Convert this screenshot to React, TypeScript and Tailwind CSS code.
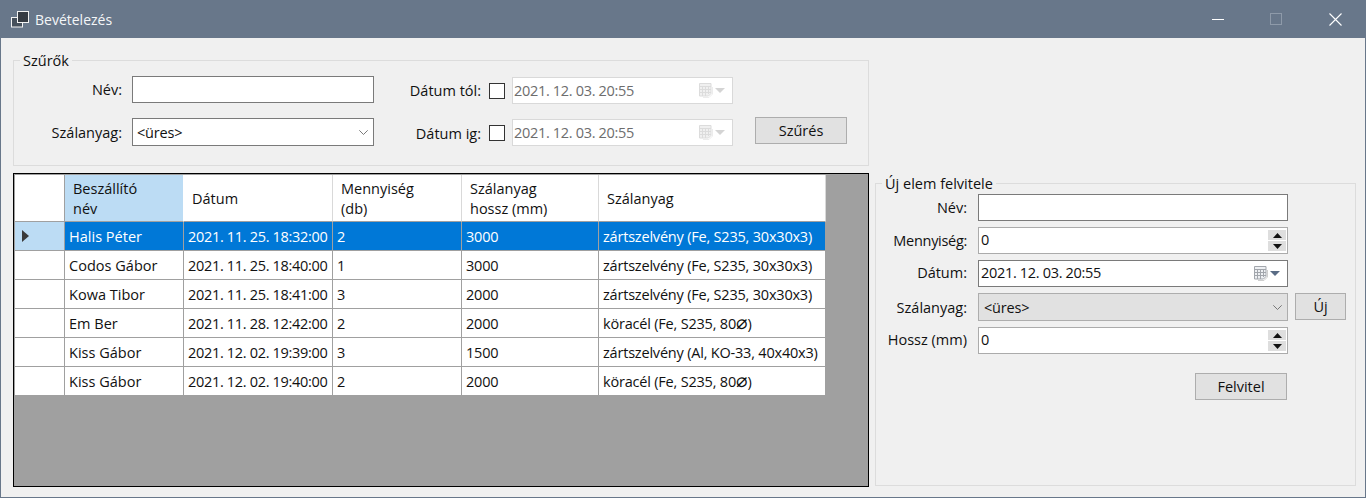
import React from "react";

const Chevron = () => (
  <svg width="9" height="5" viewBox="0 0 9 5" className="shrink-0">
    <path d="M0.3 0.3l4.2 4.2 4.2-4.2" fill="none" stroke="#6b6b6b" strokeWidth="0.9" />
  </svg>
);

const Calendar = ({ off }: { off?: boolean }) => {
  const c = off ? "#dcdcdc" : "#a2a6ac";
  return (
    <svg width="14" height="15" viewBox="0 0 14 15" className="shrink-0">
      <path d="M0.5 0.5h11.5v10l-2.5 2.5H0.5z" fill={off ? "#f0f0f0" : "#eef0f3"} stroke={c} />
      <path d="M3.5 3v10M6.5 3v10M9.5 3v8M1 3.5h11M1 6.5h11M1 9.5h11" stroke={c} strokeWidth="1" fill="none" />
      <path d="M4 14.5h6l3.5-3.5V4" fill="none" stroke={off ? "#ececec" : "#cfcfcf"} />
    </svg>
  );
};

const DateArrow = ({ off }: { off?: boolean }) => (
  <svg width="10" height="5" viewBox="0 0 10 5" className="ml-[2px] shrink-0">
    <path d="M0 0h10L5 5z" fill={off ? "#d4d4d4" : "#5a6c85"} />
  </svg>
);

const DisabledDate = () => (
  <div className="flex h-[27px] w-[221px] items-center border border-[#d9d9d9] bg-white pl-[1px] pr-[7px] text-[#6d6d6d]">
    <span className="flex-1 tracking-[-0.32px]">2021. 12. 03. 20:55</span>
    <Calendar off />
    <DateArrow off />
  </div>
);

const Btn = ({ children, className }: { children: React.ReactNode; className: string }) => (
  <div className={`flex h-[27px] items-center justify-center border border-[#adadad] bg-[#e1e1e1] ${className}`}>
    {children}
  </div>
);

const Spin = () => (
  <div className="flex w-[18px] flex-col gap-[1px]">
    <div className="flex h-[10px] items-center justify-center bg-[#dedede]">
      <svg width="9" height="5" viewBox="0 0 9 5"><path d="M0 5h9L4.5 0z" fill="#111" /></svg>
    </div>
    <div className="flex h-[10px] items-center justify-center bg-[#dedede]">
      <svg width="9" height="5" viewBox="0 0 9 5"><path d="M0 0h9L4.5 5z" fill="#111" /></svg>
    </div>
  </div>
);

const NumberBox = () => (
  <div className="flex h-[27px] w-[310px] items-center justify-between border border-[#ababab] bg-white pl-[2px] pr-[1px]">
    <span className="-mt-[2px]">0</span>
    <Spin />
  </div>
);

const FormRow = ({ label, children, labelClass = "" }: { label: string; children: React.ReactNode; labelClass?: string }) => (
  <div className="flex items-center">
    <div className={`w-[91px] text-right whitespace-nowrap ${labelClass}`}>{label}</div>
    <div className="ml-[11px] flex items-center">{children}</div>
  </div>
);

const Dia = () => <span className="font-['DejaVu_Sans'] text-[19px] leading-[0] tracking-normal">⌀</span>;

const rows: React.ReactNode[][] = [
  ["Halis Péter", "2021. 11. 25. 18:32:00", "2", "3000", "zártszelvény (Fe, S235, 30x30x3)"],
  ["Codos Gábor", "2021. 11. 25. 18:40:00", "1", "3000", "zártszelvény (Fe, S235, 30x30x3)"],
  ["Kowa Tibor", "2021. 11. 25. 18:41:00", "3", "2000", "zártszelvény (Fe, S235, 30x30x3)"],
  ["Em Ber", "2021. 11. 28. 12:42:00", "2", "2000", <>köracél (Fe, S235, 80<Dia />)</>],
  ["Kiss Gábor", "2021. 12. 02. 19:39:00", "3", "1500", "zártszelvény (Al, KO-33, 40x40x3)"],
  ["Kiss Gábor", "2021. 12. 02. 19:40:00", "2", "2000", <>köracél (Fe, S235, 80<Dia />)</>],
];

const headers = ["Beszállító\nnév", "Dátum", "Mennyiség\n(db)", "Szálanyag\nhossz (mm)", "Szálanyag"];

const tracks = ["tracking-[0.02px]", "tracking-[-0.32px]", "", "tracking-[-0.2px]", "tracking-[-0.2px]"];

export default function App() {
  return (
    <div className="flex h-[498px] w-[1366px] flex-col overflow-hidden border-x border-b border-[#68778a] bg-[#f0f0f0] text-[14.5px] leading-[19px] text-[#111] font-['Open_Sans','Liberation_Sans',sans-serif]">
      <div className="-mx-px flex h-[38px] shrink-0 items-center bg-[#68778a] pl-[11px] text-white">
        <svg width="18" height="17" viewBox="0 0 18 17" className="shrink-0">
          <rect x="0.5" y="6.5" width="11" height="9.5" fill="#46505c" stroke="#f2f2f2" />
          <rect x="6.5" y="0.5" width="11" height="11" fill="#353b43" stroke="#f2f2f2" />
        </svg>
        <span className="ml-[6px] flex-1 text-[14px] text-[#f4f6f8]">Bevételezés</span>
        <div className="flex h-full items-center">
          <div className="h-px w-[12px] bg-white" />
          <div className="ml-[46px] h-[12px] w-[12px] border border-[#8e9aa9]" />
          <svg width="13" height="13" viewBox="0 0 13 13" className="ml-[47px] mr-[24px]">
            <path d="M0.5 0.5l12 12M12.5 0.5l-12 12" stroke="#fff" strokeWidth="1.1" />
          </svg>
        </div>
      </div>

      <div className="flex flex-1">
        <div className="ml-[12px] mt-[22px] w-[856px]">
          <div className="relative h-[106px] border border-[#dcdcdc] pt-[15px]">
            <span className="absolute -top-[10px] left-[6px] bg-[#f0f0f0] px-[3px]">Szűrők</span>
            <div className="flex">
              <div className="flex flex-col gap-[15px]">
                <div className="flex h-[27px] items-center">
                  <div className="w-[108px] text-right">Név:</div>
                  <div className="ml-[10px] h-[27px] w-[242px] border border-[#7a7a7a] bg-white" />
                </div>
                <div className="flex h-[28px] items-center">
                  <div className="w-[108px] text-right">Szálanyag:</div>
                  <div className="ml-[10px] flex h-[28px] w-[242px] items-center justify-between border border-[#7a7a7a] bg-white pl-[4px] pr-[5px]">
                    <span className="tracking-[-0.2px]">&lt;üres&gt;</span>
                    <Chevron />
                  </div>
                </div>
              </div>
              <div className="mt-[1px] flex flex-col gap-[15px]">
                <div className="flex h-[27px] items-center">
                  <div className="w-[107px] text-right whitespace-nowrap">Dátum tól:</div>
                  <div className="ml-[8px] h-[16px] w-[16px] border border-[#333] bg-white" />
                  <div className="ml-[7px]"><DisabledDate /></div>
                </div>
                <div className="flex h-[27px] items-center">
                  <div className="mt-[2px] w-[107px] text-right whitespace-nowrap">Dátum ig:</div>
                  <div className="ml-[8px] h-[16px] w-[16px] border border-[#333] bg-white" />
                  <div className="ml-[7px]"><DisabledDate /></div>
                </div>
              </div>
              <Btn className="ml-[22px] mt-[41px] w-[92px]">Szűrés</Btn>
            </div>
          </div>

          <div className="mt-[7px] h-[314px] w-[856px] border border-black bg-[#a0a0a0] pl-px pt-px">
            <div className="grid w-fit grid-cols-[50px_119px_149px_129px_137px_227px]">
              <div className="h-[47px] border-r border-b border-[#a0a0a0] bg-white" />
              {headers.map((h, i) => (
                <div
                  key={h}
                  className={`flex h-[47px] items-center whitespace-pre-line border-b border-[#a0a0a0] pl-[8px] pt-[2px] leading-[20px] ${
                    i === 0 ? "border-r border-r-white bg-[#bcdcf4]" : "border-r border-r-[#d9d9d9] bg-white"
                  }`}
                >
                  {h}
                </div>
              ))}
              {rows.map((r, ri) => (
                <React.Fragment key={ri}>
                  <div className={`flex h-[29px] items-center border-r border-b border-[#a0a0a0] pl-[7px] ${ri === 0 ? "bg-[#bcdcf4]" : "bg-white"}`}>
                    {ri === 0 && (
                      <svg width="7" height="12" viewBox="0 0 7 12"><path d="M0 0l7 6-7 6z" fill="#3a3a3a" /></svg>
                    )}
                  </div>
                  {r.map((c, ci) => (
                    <div
                      key={ci}
                      className={`flex h-[29px] items-center whitespace-nowrap border-r border-b border-[#a0a0a0] pl-[4px] ${tracks[ci]} ${
                        ri === 0 ? "bg-[#0078d7] text-white" : "bg-white text-[#111]"
                      }`}
                    >
                      <span>{c}</span>
                    </div>
                  ))}
                </React.Fragment>
              ))}
            </div>
          </div>
        </div>

        <div className="relative ml-[6px] mt-[145px] h-[303px] w-[481px] border border-[#dcdcdc] pt-[10px]">
          <span className="absolute -top-[10px] left-[6px] bg-[#f0f0f0] px-[3px]">Új elem felvitele</span>
          <div className="flex flex-col gap-[6px]">
            <FormRow label="Név:">
              <div className="h-[27px] w-[310px] border border-[#7a7a7a] bg-white" />
            </FormRow>
            <FormRow label="Mennyiség:" labelClass="tracking-[-0.3px]">
              <NumberBox />
            </FormRow>
            <FormRow label="Dátum:" labelClass="-mt-[2px]">
              <div className="flex h-[27px] w-[310px] items-center border border-[#7a7a7a] bg-white pl-[2px] pr-[7px]">
                <span className="-mt-[2px] flex-1 tracking-[-0.32px]">2021. 12. 03. 20:55</span>
                <Calendar />
                <DateArrow />
              </div>
            </FormRow>
            <FormRow label="Szálanyag:">
              <div className="flex h-[28px] w-[310px] items-center justify-between border border-[#adadad] bg-[#e1e1e1] pl-[5px] pr-[5px]">
                <span className="tracking-[-0.2px]">&lt;üres&gt;</span>
                <Chevron />
              </div>
              <Btn className="ml-[7px] w-[51px] self-start">Új</Btn>
            </FormRow>
            <FormRow label="Hossz (mm)" labelClass="-mt-[2px]">
              <NumberBox />
            </FormRow>
          </div>
          <Btn className="ml-[319px] mt-[19px] w-[92px]">Felvitel</Btn>
        </div>
      </div>
    </div>
  );
}
